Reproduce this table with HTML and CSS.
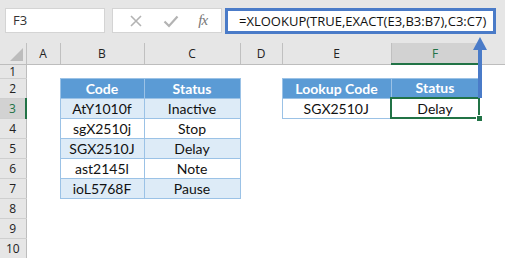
FILE: index.html
```html
<!DOCTYPE html>
<html lang="en">
<head>
  <meta charset="UTF-8" />
  <title>XLOOKUP EXACT</title>
  <link rel="stylesheet" href="styles.css">
</head>
<body>
  <div class="app">
    <!-- formula bar -->
    <div class="toolbar">
      <div class="namebox">F3</div>
      <div class="fxbtns">
        <svg class="ico" width="14" height="14" viewBox="0 0 14 14"><path d="M2 2 L12 12 M12 2 L2 12" stroke="#b3b3b3" stroke-width="1.6" fill="none"/></svg>
        <svg class="ico" width="16" height="14" viewBox="0 0 16 14"><path d="M1.5 7.5 L6 12 L14.5 2.5" stroke="#b3b3b3" stroke-width="2.2" fill="none"/></svg>
        <span class="fx">fx</span>
      </div>
      <div class="formula">=XLOOKUP(TRUE,EXACT(E3,B3:B7),C3:C7)</div>
    </div>

    <table class="sheet">
      <colgroup>
        <col style="width:26px"><col style="width:34px"><col style="width:84px"><col style="width:96px">
        <col style="width:42px"><col style="width:109px"><col style="width:88px"><col>
      </colgroup>
      <thead>
        <tr>
          <th class="corner"><span class="tri"></span></th>
          <th>A</th><th>B</th><th>C</th><th>D</th><th>E</th><th class="cur">F</th><th class="last"></th>
        </tr>
      </thead>
      <tbody>
        <tr class="first"><th>1</th><td></td><td></td><td></td><td></td><td></td><td></td><td></td></tr>
        <tr><th>2</th><td></td><td class="hd">Code</td><td class="hd">Status</td><td></td><td class="hd">Lookup Code</td><td class="hd">Status</td><td></td></tr>
        <tr><th class="cur">3</th><td></td><td class="alt">AtY1010f</td><td class="alt">Inactive</td><td></td><td class="val">SGX2510J</td><td class="val sel">Delay</td><td></td></tr>
        <tr><th>4</th><td></td><td class="val">sgX2510j</td><td class="val">Stop</td><td></td><td></td><td></td><td></td></tr>
        <tr><th>5</th><td></td><td class="alt">SGX2510J</td><td class="alt">Delay</td><td></td><td></td><td></td><td></td></tr>
        <tr><th>6</th><td></td><td class="val">ast2145l</td><td class="val">Note</td><td></td><td></td><td></td><td></td></tr>
        <tr><th>7</th><td></td><td class="alt">ioL5768F</td><td class="alt">Pause</td><td></td><td></td><td></td><td></td></tr>
        <tr><th>8</th><td></td><td></td><td></td><td></td><td></td><td></td><td></td></tr>
        <tr><th>9</th><td></td><td></td><td></td><td></td><td></td><td></td><td></td></tr>
        <tr><th>10</th><td></td><td></td><td></td><td></td><td></td><td></td><td></td></tr>
      </tbody>
    </table>

    <!-- callout arrow from formula to F3 -->
    <svg class="arrow" width="16" height="64" viewBox="0 0 16 64">
      <path d="M8 0 L15 13 L1 13 Z" fill="#4a7bc8"/>
      <rect x="6" y="12" width="4" height="49" fill="#4a7bc8"/>
    </svg>
  </div>
</body>
</html>
```

FILE: styles.css
```css
body {
  margin: 0;
  background: #fff;
  font-family: 'Open Sans', sans-serif;
  color: #222;
}
.app {
  position: relative;
  width: 505px;
  height: 258px;
  overflow: hidden;
}
.toolbar {
  display: flex;
  align-items: flex-start;
  gap: 7px;
  height: 43px;
  box-sizing: border-box;
  padding: 8px 0 0 5px;
  background: #e6e6e6;
}
.namebox {
  width: 100px;
  height: 25px;
  box-sizing: border-box;
  background: #fff;
  border: 1px solid #d4d4d4;
  padding-left: 7px;
  font-size: 13px;
  line-height: 23px;
  color: #333;
}
.fxbtns {
  width: 110px;
  height: 25px;
  box-sizing: border-box;
  background: #fff;
  border: 1px solid #d4d4d4;
  display: flex;
  align-items: center;
  justify-content: space-around;
  padding: 0 4px 0 6px;
}
.fx {
  font-family: 'Liberation Serif', serif;
  font-style: italic;
  font-size: 15px;
  color: #777;
  letter-spacing: -1px;
}
.formula {
  margin-left: -4px;
  width: 271px;
  height: 26px;
  box-sizing: border-box;
  border: 3px solid #4a7bc8;
  background: #fff;
  padding-left: 11px;
  font-size: 13px;
  line-height: 20px;
  color: #111;
  white-space: nowrap;
}
.sheet {
  border-collapse: collapse;
  table-layout: fixed;
  width: 505px;
}
.sheet thead th {
  height: 20px;
  padding: 0;
  background: #e6e6e6;
  border-right: 1px solid #c0c0c0;
  border-bottom: 1px solid #bdbdbd;
  font-weight: normal;
  font-size: 12px;
  color: #222;
  text-align: center;
}
.sheet thead th.last {
  border-right: none;
}
.sheet thead th.cur {
  background: #d2d2d2;
  color: #217346;
  border-bottom: 2px solid #217346;
}
.corner {
  position: relative;
}
.tri {
  position: absolute;
  right: 3px;
  bottom: 3px;
  width: 0;
  height: 0;
  border-left: 13px solid transparent;
  border-bottom: 13px solid #bcbcbc;
}
.sheet tbody th {
  height: 19px;
  padding: 0;
  background: #e6e6e6;
  border-right: 1px solid #bdbdbd;
  border-bottom: 1px solid #cfcfcf;
  font-weight: normal;
  font-size: 12px;
  color: #222;
  text-align: center;
}
.sheet tbody th.cur {
  background: #d2d2d2;
  color: #217346;
  border-right: 2px solid #217346;
}
.sheet tr.first th {
  height: 13px;
  line-height: 13px;
  vertical-align: bottom;
}
.sheet td {
  padding: 0;
  font-family: 'Lato', sans-serif;
  font-size: 14px;
  color: #111;
  text-align: center;
}
.sheet td.hd {
  background: #5b9bd5;
  color: #fff;
  font-weight: bold;
  border: 1px solid #9bc2e6;
}
.sheet td.alt {
  background: #ddebf7;
  border: 1px solid #9bc2e6;
}
.sheet td.val {
  border: 1px solid #9bc2e6;
}
.sheet td.sel {
  position: relative;
  border: 2px solid #217346;
}
.sheet td.sel::after {
  content: "";
  position: absolute;
  right: -5px;
  bottom: -5px;
  width: 5px;
  height: 5px;
  background: #217346;
  border: 1px solid #fff;
}
.arrow {
  position: absolute;
  left: 472px;
  top: 37px;
}
```
